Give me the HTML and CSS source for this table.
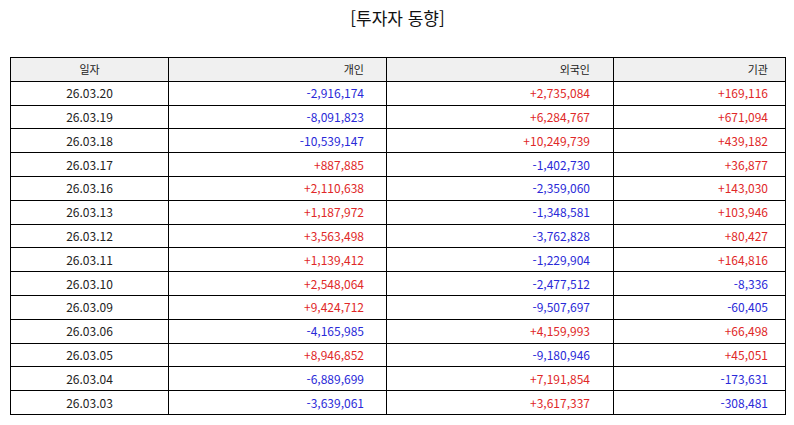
FILE: index.html
```html
<!DOCTYPE html>
<html lang="ko">
<head>
<meta charset="utf-8">
<link rel="stylesheet" href="styles.css">
</head>
<body>
<div class="page">
  <h1 class="title">[투자자 동향]</h1>
  <table class="grid">
    <colgroup>
      <col class="c-date"><col class="c-ind"><col class="c-for"><col class="c-inst">
    </colgroup>
    <thead>
      <tr><th class="date">일자</th><th class="ind">개인</th><th class="for">외국인</th><th class="inst">기관</th></tr>
    </thead>
    <tbody>
      <tr><td class="date">26.03.20</td><td class="ind dn">-2,916,174</td><td class="for up">+2,735,084</td><td class="inst up">+169,116</td></tr>
      <tr><td class="date">26.03.19</td><td class="ind dn">-8,091,823</td><td class="for up">+6,284,767</td><td class="inst up">+671,094</td></tr>
      <tr><td class="date">26.03.18</td><td class="ind dn">-10,539,147</td><td class="for up">+10,249,739</td><td class="inst up">+439,182</td></tr>
      <tr><td class="date">26.03.17</td><td class="ind up">+887,885</td><td class="for dn">-1,402,730</td><td class="inst up">+36,877</td></tr>
      <tr><td class="date">26.03.16</td><td class="ind up">+2,110,638</td><td class="for dn">-2,359,060</td><td class="inst up">+143,030</td></tr>
      <tr><td class="date">26.03.13</td><td class="ind up">+1,187,972</td><td class="for dn">-1,348,581</td><td class="inst up">+103,946</td></tr>
      <tr><td class="date">26.03.12</td><td class="ind up">+3,563,498</td><td class="for dn">-3,762,828</td><td class="inst up">+80,427</td></tr>
      <tr><td class="date">26.03.11</td><td class="ind up">+1,139,412</td><td class="for dn">-1,229,904</td><td class="inst up">+164,816</td></tr>
      <tr><td class="date">26.03.10</td><td class="ind up">+2,548,064</td><td class="for dn">-2,477,512</td><td class="inst dn">-8,336</td></tr>
      <tr><td class="date">26.03.09</td><td class="ind up">+9,424,712</td><td class="for dn">-9,507,697</td><td class="inst dn">-60,405</td></tr>
      <tr><td class="date">26.03.06</td><td class="ind dn">-4,165,985</td><td class="for up">+4,159,993</td><td class="inst up">+66,498</td></tr>
      <tr><td class="date">26.03.05</td><td class="ind up">+8,946,852</td><td class="for dn">-9,180,946</td><td class="inst up">+45,051</td></tr>
      <tr><td class="date">26.03.04</td><td class="ind dn">-6,889,699</td><td class="for up">+7,191,854</td><td class="inst dn">-173,631</td></tr>
      <tr><td class="date">26.03.03</td><td class="ind dn">-3,639,061</td><td class="for up">+3,617,337</td><td class="inst dn">-308,481</td></tr>
    </tbody>
  </table>
</div>
</body>
</html>
```

FILE: styles.css
```css
html, body {
  margin: 0;
  padding: 0;
  background: #ffffff;
}

.page {
  width: 794px;
  height: 425px;
  padding: 0 9px 0 10px;
  box-sizing: border-box;
  font-family: "Noto Sans CJK KR", "Noto Sans", sans-serif;
  color: #222222;
}

.title {
  margin: 0;
  padding-top: 6px;
  height: 57px;
  box-sizing: border-box;
  font-size: 17px;
  font-weight: normal;
  line-height: 24px;
  text-align: center;
  color: #111111;
}

.grid {
  width: 775px;
  border-collapse: collapse;
  table-layout: fixed;
  font-size: 12px;
}

.c-date { width: 158px; }
.c-ind { width: 218px; }
.c-for { width: 227px; }
.c-inst { width: 172px; }

.grid th,
.grid td {
  border: 1px solid #000000;
  height: 22.8px;
  padding: 0;
  line-height: 14px;
  font-weight: normal;
  white-space: nowrap;
}

.grid th {
  background: #f0f0f0;
  color: #222222;
  font-size: 11px;
}

.grid .date { text-align: center; }
.grid .ind { text-align: right; padding-right: 22px; }
.grid .for { text-align: right; padding-right: 23px; }
.grid .inst { text-align: right; padding-right: 17px; }

.up { color: #e02828; }
.dn { color: #2a2ad8; }
```
